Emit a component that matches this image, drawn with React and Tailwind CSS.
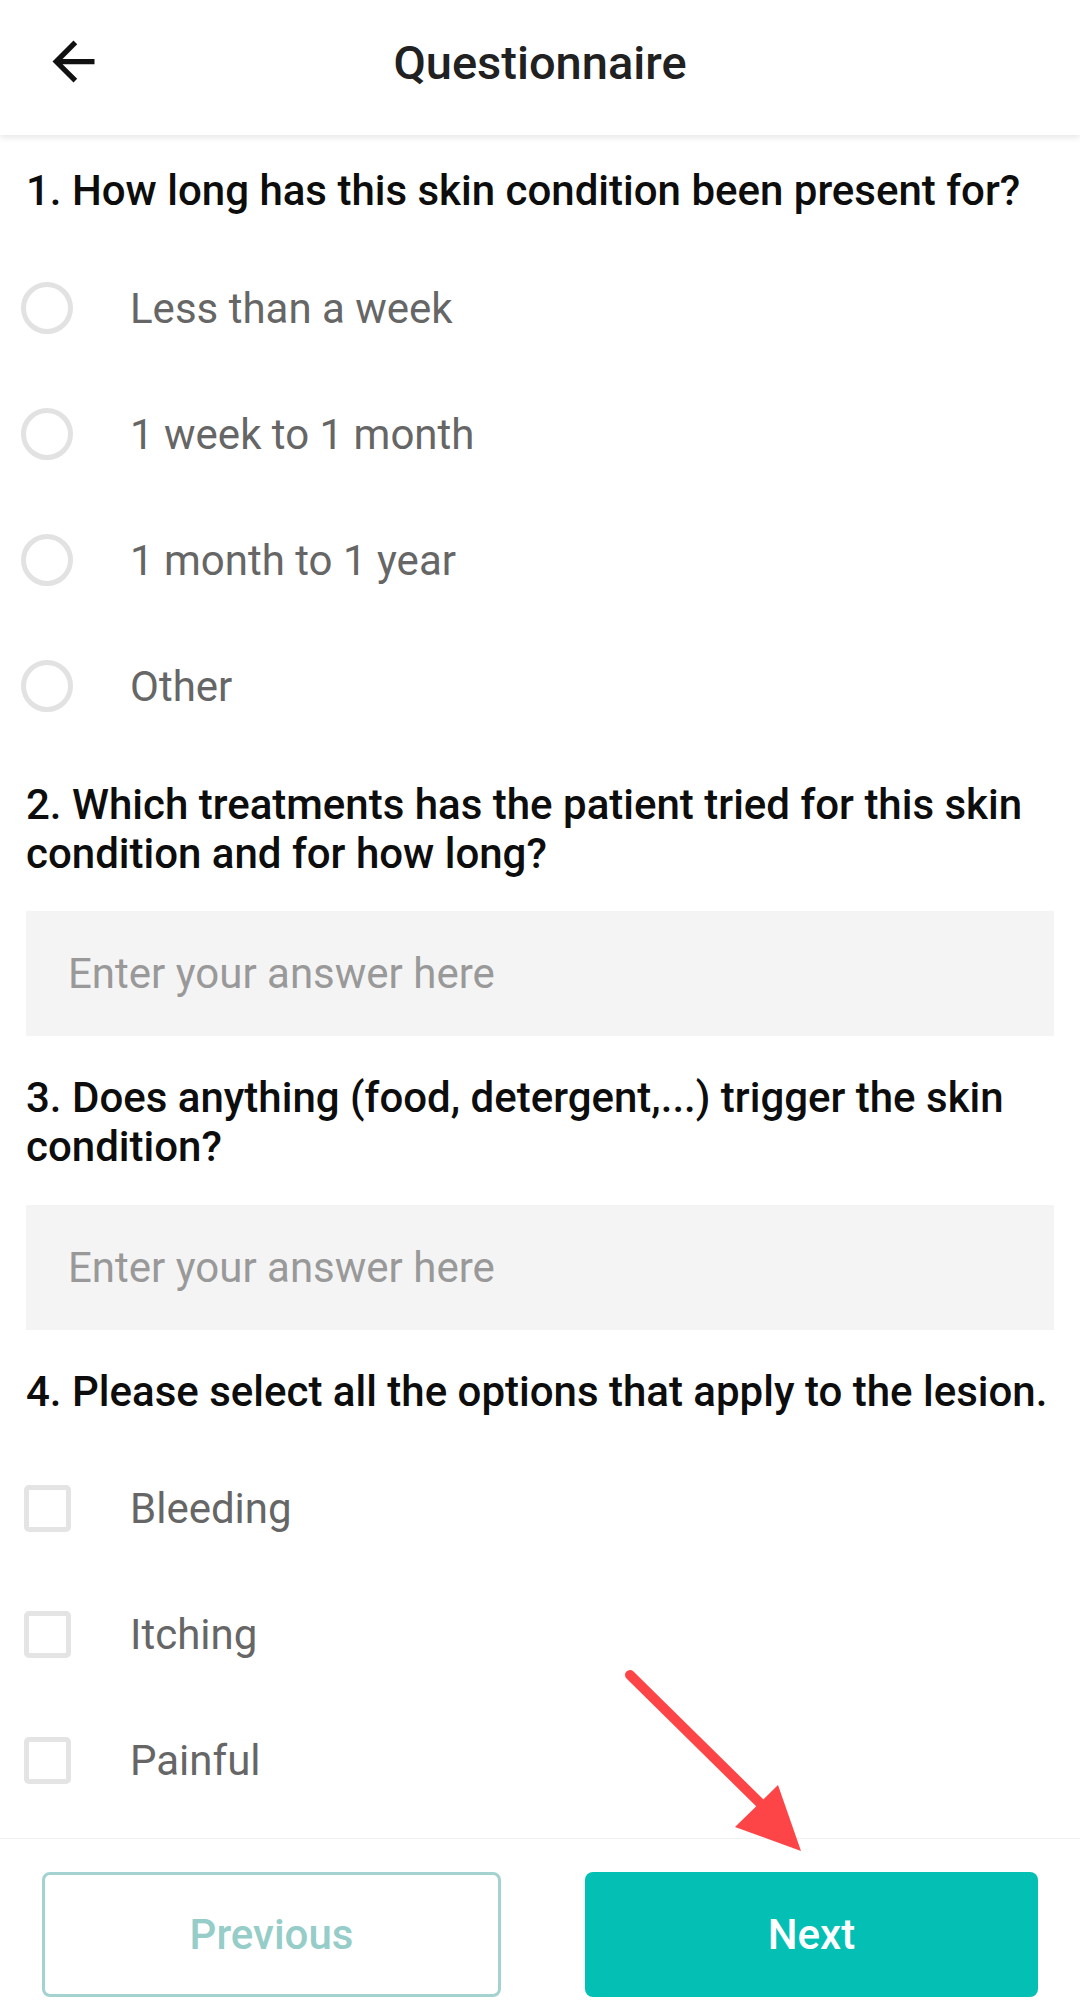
import React, { useState } from 'react';

const durations = ['Less than a week', '1 week to 1 month', '1 month to 1 year', 'Other'];
const lesionOptions = ['Bleeding', 'Itching', 'Painful'];

function Radio({ label }) {
  return (
    <div className="flex items-center h-[126px] pl-[21px] gap-[57px]">
      <span className="w-[52px] h-[52px] rounded-full border-[5px] border-[#e2e2e2] shrink-0" />
      <span className="text-[42px] leading-[49px] text-[#666666]">{label}</span>
    </div>
  );
}

function Checkbox({ label }) {
  return (
    <div className="flex items-center h-[126px] pl-[24px] gap-[59px]">
      <span className="w-[47px] h-[47px] rounded-[5px] border-[5px] border-[#e4e4e4] shrink-0" />
      <span className="text-[42px] leading-[49px] text-[#666666]">{label}</span>
    </div>
  );
}

function AnswerBox({ value, onChange }) {
  return (
    <input
      value={value}
      onChange={(e) => onChange(e.target.value)}
      placeholder="Enter your answer here"
      className="w-full h-[125px] bg-[#f4f4f4] pl-[42px] text-[42px] text-[#333] placeholder:text-[#999999] outline-none"
    />
  );
}

export default function App() {
  const [treatments, setTreatments] = useState('');
  const [triggers, setTriggers] = useState('');

  return (
    <div className="relative w-[1080px] h-[2012px] bg-white flex flex-col overflow-hidden font-['Roboto',sans-serif]">
      {/* toolbar */}
      <div className="relative z-10 h-[135px] shrink-0 flex items-center pb-[10px] bg-white shadow-[0_3px_6px_rgba(0,0,0,0.09)]">
        <svg viewBox="0 0 24 24" className="absolute left-[42px] top-[30px] w-[63px] h-[63px]" fill="#111">
          <path d="M20 11H7.83l5.59-5.59L12 4l-8 8 8 8 1.41-1.41L7.83 13H20v-2z" />
        </svg>
        <h1 className="w-full text-center text-[47px] font-medium text-[#212121] leading-none">Questionnaire</h1>
      </div>

      {/* questions */}
      <div className="flex-1 overflow-hidden px-[26px] text-[42px] leading-[49px]">
        <p className="mt-[31px] font-medium text-[#0d0d0d]">1. How long has this skin condition been present for?</p>
        <div className="mt-[30px] -mx-[26px]">
          {durations.map((d) => (
            <Radio key={d} label={d} />
          ))}
        </div>

        <p className="mt-[31px] font-medium text-[#0d0d0d]">
          2. Which treatments has the patient tried for this skin condition and for how long?
        </p>
        <div className="mt-[33px]">
          <AnswerBox value={treatments} onChange={setTreatments} />
        </div>

        <p className="mt-[37px] font-medium text-[#0d0d0d]">
          3. Does anything (food, detergent,...) trigger the skin condition?
        </p>
        <div className="mt-[34px]">
          <AnswerBox value={triggers} onChange={setTriggers} />
        </div>

        <p className="mt-[37px] font-medium text-[#0d0d0d] whitespace-nowrap">
          4. Please select all the options that apply to the lesion.
        </p>
        <div className="mt-[29px] -mx-[26px]">
          {lesionOptions.map((o) => (
            <Checkbox key={o} label={o} />
          ))}
        </div>
      </div>

      {/* footer */}
      <div className="shrink-0 border-t border-[#f0f0f0] bg-white pt-[33px] pb-[15px] px-[42px] flex gap-[84px]">
        <button className="flex-1 h-[125px] rounded-[8px] border-[3px] border-[#a3d2d0] text-[42px] font-medium text-[#96cdc9]">
          Previous
        </button>
        <button className="flex-1 h-[125px] rounded-[8px] bg-[#03bfb4] text-[42px] font-medium text-white">
          Next
        </button>
      </div>

      {/* annotation arrow */}
      <svg viewBox="0 0 1080 2012" className="absolute inset-0 w-[1080px] h-[2012px] pointer-events-none">
        <line x1="630" y1="1675" x2="765" y2="1808" stroke="#fd4547" strokeWidth="10" strokeLinecap="round" />
        <polygon points="778,1785 735,1827 801,1851" fill="#fd4547" />
      </svg>
    </div>
  );
}
